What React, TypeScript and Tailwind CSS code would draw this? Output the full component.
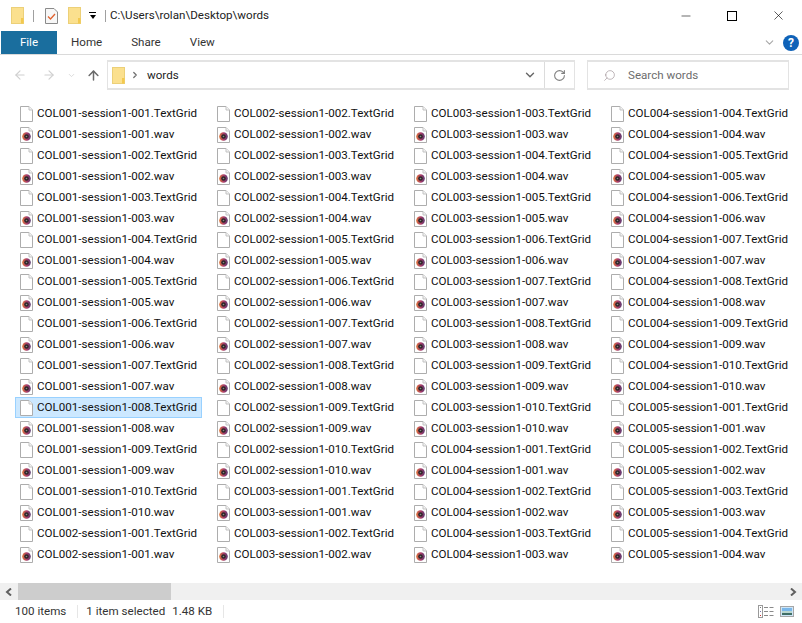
import { ChevronDown, ChevronRight, ArrowLeft, ArrowRight, ArrowUp, RotateCw, Search, Minus, X } from 'lucide-react';

// 100 items in the folder, the list is scrolled so only the first 88 are in view
const items: string[] = [];
for (let c = 1; c <= 5; c++) {
  for (let s = 1; s <= 10; s++) {
    const base = `COL00${c}-session1-${String(s).padStart(3, '0')}`;
    items.push(`${base}.TextGrid`, `${base}.wav`);
  }
}
const visible = items.slice(0, 88);

function Folder({ className = '' }: { className?: string }) {
  return (
    <svg width="13" height="17" viewBox="0 0 13 17" className={className}>
      <rect x="0.5" y="0.5" width="12" height="16" fill="#fbe08e" stroke="#ecd078" />
      <rect x="10" y="11" width="2.5" height="5.5" fill="#f3c94f" />
    </svg>
  );
}

function TextFileIcon() {
  return (
    <svg width="13" height="16" viewBox="0 0 13 16" className="shrink-0">
      <path d="M0.5 0.5H9L12.5 4V15.5H0.5Z" fill="#fff" stroke="#adadad" />
      <path d="M9 0.5V4H12.5" fill="#f4f4f4" stroke="#c2c2c2" />
    </svg>
  );
}

function WavIcon() {
  return (
    <svg width="13" height="16" viewBox="0 0 13 16" className="shrink-0">
      <path d="M0.5 0.5H9L12.5 4V15.5H0.5Z" fill="#fff" stroke="#adadad" />
      <path d="M9 0.5V4H12.5" fill="#f4f4f4" stroke="#c2c2c2" />
      <circle cx="6.5" cy="9.5" r="4.3" fill="url(#wavDisc)" />
      <circle cx="6.5" cy="9.5" r="2.3" fill="#2c2628" />
      <circle cx="6.5" cy="9.5" r="0.8" fill="#8c8486" />
      <defs>
        <linearGradient id="wavDisc" x1="0" y1="0" x2="1" y2="0">
          <stop offset="0" stopColor="#e0763a" />
          <stop offset="0.55" stopColor="#a83a6a" />
          <stop offset="1" stopColor="#5a3a70" />
        </linearGradient>
      </defs>
    </svg>
  );
}

function FileRow({ name, selected }: { name: string; selected: boolean }) {
  return (
    <div className={`flex h-[21px] w-[187px] items-center gap-[4px] border pl-[4px] ${selected ? 'border-[#99d1ff] bg-[#cce8ff]' : 'border-transparent'}`}>
      {name.endsWith('.wav') ? <WavIcon /> : <TextFileIcon />}
      <span className="whitespace-nowrap text-[11.6px] leading-none text-[#111]">{name}</span>
    </div>
  );
}

export default function App() {
  return (
    <div className="flex h-[623px] w-[802px] flex-col overflow-hidden bg-white font-['Roboto','Open_Sans',sans-serif] text-[11.6px] text-black">
      {/* title bar */}
      <div className="flex h-[31px] shrink-0 items-center pl-[11px]">
        <Folder />
        <div className="ml-[9px] h-[12px] w-px bg-[#a0a0a0]" />
        <svg width="13" height="16" viewBox="0 0 13 16" className="ml-[11px]">
          <path d="M0.5 0.5H9L12.5 4V15.5H0.5Z" fill="#f7f7f7" stroke="#8a8a8a" />
          <path d="M3 8.5L5.5 11L10 6" fill="none" stroke="#e0622f" strokeWidth="1.3" />
        </svg>
        <Folder className="ml-[10px]" />
        <div className="ml-[8px] flex flex-col items-center gap-[2px]">
          <div className="h-px w-[7px] bg-black" />
          <div className="h-0 w-0 border-x-[3.5px] border-t-[4px] border-x-transparent border-t-black" />
        </div>
        <div className="ml-[9px] h-[12px] w-px bg-[#a0a0a0]" />
        <span className="ml-[4px] text-[#222]">C:\Users\rolan\Desktop\words</span>
        <div className="ml-auto flex items-center pr-px">
          <div className="flex w-[46px] justify-center"><Minus size={14} strokeWidth={1} /></div>
          <div className="flex w-[46px] justify-center"><div className="h-[10px] w-[10px] border border-black" /></div>
          <div className="flex w-[46px] justify-center"><X size={15} strokeWidth={1} /></div>
        </div>
      </div>

      {/* ribbon tabs */}
      <div className="flex h-[24px] shrink-0 items-stretch border-b border-[#dadada] pl-px">
        <div className="flex w-[56px] items-center justify-center bg-[#1a6e9e] pt-px text-white">File</div>
        <div className="ml-[14px] flex items-center pt-px text-[#333]">Home</div>
        <div className="ml-[29px] flex items-center pt-px text-[#333]">Share</div>
        <div className="ml-[29px] flex items-center pt-px text-[#333]">View</div>
        <div className="ml-auto flex items-center gap-[7px] pr-[3px]">
          <ChevronDown size={13} className="text-[#a8a8a8]" />
          <div className="flex h-[16px] w-[16px] items-center justify-center rounded-full bg-[#0f62b8] text-[12px] font-bold leading-none text-white">?</div>
        </div>
      </div>

      {/* address row */}
      <div className="flex h-[35px] shrink-0 items-center pl-[13px] pt-[5px]">
        <ArrowLeft size={14} className="text-[#d0d0d0]" />
        <ArrowRight size={14} className="ml-[15px] text-[#d0d0d0]" />
        <ChevronDown size={9} className="ml-[11px] text-[#d0d0d0]" />
        <ArrowUp size={15} strokeWidth={2.4} className="ml-[10px] text-[#6b6b6b]" />
        <div className="ml-[6px] flex h-[30px] w-[468px] items-center border-2 border-x-[1px] border-[#e3e3e3] pl-[4px]">
          <Folder />
          <ChevronRight size={10} strokeWidth={3} className="ml-[5px] text-[#707070]" />
          <span className="ml-[7px] pt-px text-[#222]">words</span>
          <div className="ml-auto flex h-full items-center">
            <ChevronDown size={14} strokeWidth={2.4} className="mr-[7px] text-[#666]" />
            <div className="flex h-full w-[30px] items-center justify-center border-l border-[#dcdcdc]">
              <RotateCw size={13} strokeWidth={2} className="text-[#808080]" />
            </div>
          </div>
        </div>
        <div className="ml-[12px] flex h-[30px] w-[202px] items-center border-2 border-x-[1px] border-[#e3e3e3] pl-[15px]">
          <Search size={13} strokeWidth={1} className="-scale-x-100 text-[#8a7a80]" />
          <span className="ml-[12px] pt-px text-[#6d6d6d]">Search words</span>
        </div>
      </div>

      {/* file list */}
      <div className="min-h-0 flex-1 overflow-hidden pl-[15px] pt-[13px]">
        <div className="grid auto-cols-[197px] grid-flow-col grid-rows-[repeat(22,21px)]">
          {visible.map((name, i) => (
            <FileRow key={name} name={name} selected={i === 14} />
          ))}
        </div>
      </div>

      {/* scrollbar */}
      <div className="flex h-[17px] shrink-0 items-stretch bg-[#f0f0f0]">
        <div className="flex w-[18px] items-center justify-center">
          <svg width="8" height="8" viewBox="0 0 8 8"><path d="M6 0.5L2 4L6 7.5" fill="none" stroke="#606060" strokeWidth="2" /></svg>
        </div>
        <div className="w-[153px] bg-[#cdcdcd]" />
        <div className="ml-auto flex w-[18px] items-center justify-center">
          <svg width="8" height="8" viewBox="0 0 8 8"><path d="M2 0.5L6 4L2 7.5" fill="none" stroke="#606060" strokeWidth="2" /></svg>
        </div>
      </div>

      {/* status bar */}
      <div className="flex h-[23px] shrink-0 items-center text-[#333]">
        <span className="ml-[15px]">100 items</span>
        <div className="ml-[11px] h-[13px] w-px bg-[#e6e6e6]" />
        <span className="ml-[8px]">1 item selected</span>
        <span className="ml-[7px]">1.48 KB</span>
        <div className="ml-[11px] h-[13px] w-px bg-[#e6e6e6]" />
        <div className="ml-auto flex items-center gap-[6px] pr-[8px]">
          <svg width="16" height="13" viewBox="0 0 16 13">
            <rect x="0.5" y="0.5" width="4" height="12" fill="#fff" stroke="#9a9a9a" />
            <rect x="2" y="2" width="1" height="1" fill="#777" />
            <rect x="2" y="6" width="1" height="1" fill="#77a" />
            <rect x="2" y="10" width="1" height="1" fill="#c33" />
            <path d="M6 2.5h4M11.5 2.5h4M6 6.5h4M11.5 6.5h4M6 10.5h4M11.5 10.5h4" stroke="#8a8a8a" />
          </svg>
          <svg width="14" height="11" viewBox="0 0 14 11">
            <rect x="0.5" y="0.5" width="13" height="10" fill="#cfe6f7" stroke="#a6a6a6" />
            <rect x="2" y="2" width="10" height="3" fill="#7ab7ea" />
            <rect x="2" y="5" width="10" height="2" fill="#b9d6cf" />
            <rect x="2" y="7" width="10" height="2" fill="#3f6e66" />
          </svg>
        </div>
      </div>
    </div>
  );
}
